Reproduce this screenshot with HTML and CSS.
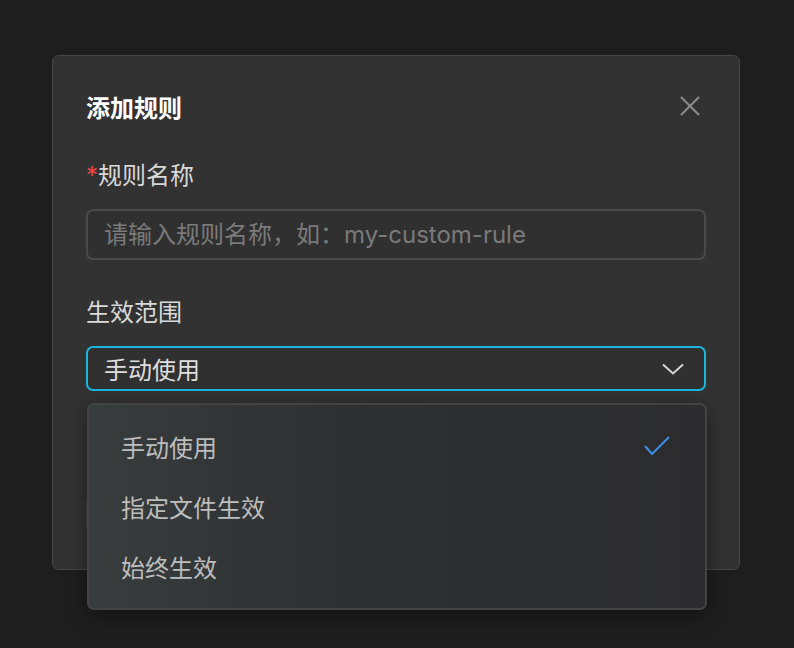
FILE: index.html
```html
<!DOCTYPE html>
<html>
<head>
  <link rel="stylesheet" href="styles.css">
</head>
<body>
  <div class="dialog">
    <div class="dialog-header">
      <h2 class="dialog-title">添加规则</h2>
      <button class="close-btn" aria-label="关闭">
        <svg width="20" height="20" viewBox="0 0 20 20">
          <path d="M1 1 L19 19 M19 1 L1 19" stroke="#8c8c8c" stroke-width="2" fill="none"/>
        </svg>
      </button>
    </div>

    <div class="field first">
      <label class="field-label"><span class="required">*</span>规则名称</label>
      <input type="text" class="text-input" placeholder="请输入规则名称，如：my-custom-rule">
    </div>

    <div class="field">
      <label class="field-label">生效范围</label>
      <div class="select-wrap">
        <div class="select">
          <span class="select-value">手动使用</span>
          <svg class="chevron" width="24" height="12" viewBox="0 0 24 12">
            <path d="M2 1.5 L12 10.5 L22 1.5" stroke="#d6d6d6" stroke-width="2" fill="none"/>
          </svg>
        </div>
        <ul class="dropdown">
          <li class="option selected">
            <span>手动使用</span>
            <svg width="26" height="20" viewBox="0 0 26 20">
              <path d="M1 10 L8 18 L25 1" stroke="#3a8ee8" stroke-width="2" fill="none"/>
            </svg>
          </li>
          <li class="option"><span>指定文件生效</span></li>
          <li class="option"><span>始终生效</span></li>
        </ul>
      </div>
    </div>

    <div class="field behind">
      <div class="hidden-box"></div>
    </div>
  </div>
</body>
</html>
```

FILE: styles.css
```css
body, html {
  margin: 0;
  padding: 0;
  background-color: #1e1e1e;
  font-family: Inter, "Noto Sans CJK SC", sans-serif;
}

body {
  height: 648px;
}

.dialog {
  box-sizing: border-box;
  margin: 55px 0 0 52px;
  width: 688px;
  height: 515px;
  padding: 34px 33px 0;
  background-color: #323232;
  border: 1px solid #464646;
  border-radius: 7px;
}

.dialog-header {
  display: flex;
  align-items: center;
  justify-content: space-between;
  height: 32px;
}

.dialog-title {
  margin: 0;
  font-size: 24px;
  font-weight: bold;
  color: #ffffff;
}

.close-btn {
  display: flex;
  padding: 0;
  margin-right: 6px;
  background: none;
  border: none;
  cursor: pointer;
}

.field {
  margin-top: 37px;
}

.field.first {
  margin-top: 38px;
}

.field-label {
  display: block;
  height: 32px;
  line-height: 32px;
  font-size: 24px;
  color: #d9d9d9;
  margin-bottom: 17px;
}

.required {
  color: #f04848;
}

.text-input {
  box-sizing: border-box;
  display: block;
  width: 100%;
  height: 51px;
  padding: 0 16px;
  font-family: inherit;
  font-size: 24px;
  color: #ddd;
  background-color: #303030;
  border: 2px solid #4a4a4a;
  border-radius: 7px;
  outline: none;
}

.text-input::placeholder {
  color: #7a7a7a;
}

.select-wrap {
  position: relative;
}

.select {
  box-sizing: border-box;
  display: flex;
  align-items: center;
  justify-content: space-between;
  height: 45px;
  padding: 0 19px 0 16px;
  border: 2px solid #1cb5dc;
  border-radius: 7px;
  background-color: #303030;
}

.select-value {
  font-size: 24px;
  color: #dedede;
}

.dropdown {
  position: absolute;
  top: 57px;
  left: 1px;
  right: -1px;
  box-sizing: border-box;
  margin: 0;
  padding: 11px 0 12px;
  list-style: none;
  background: linear-gradient(90deg, #373c3d 0%, #2e2f31 45%, #2c2c2e 100%);
  border: 2px solid #434343;
  border-radius: 7px;
  box-shadow: 0 6px 20px rgba(0, 0, 0, 0.4);
  z-index: 2;
}

.option {
  display: flex;
  align-items: center;
  justify-content: space-between;
  height: 60px;
  padding: 0 35px 0 32px;
  font-size: 24px;
  color: #bdbdbd;
}

.field.behind {
  margin-top: 104px;
}

.hidden-box {
  height: 34px;
  border: 2px solid #444;
  border-radius: 7px;
}
```
